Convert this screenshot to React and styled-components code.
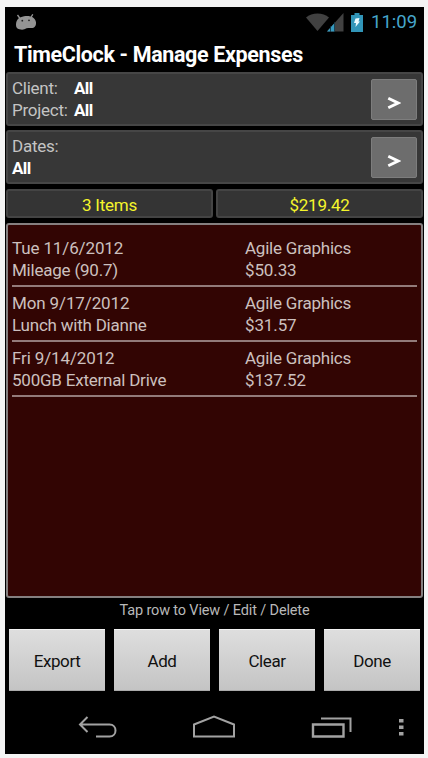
import React from "react";
import styled, { createGlobalStyle } from "styled-components";

const GlobalStyle = createGlobalStyle`
  * { box-sizing: border-box; }
  body {
    margin: 0;
    background: #f4f4f4;
    font-family: Roboto, "Liberation Sans", sans-serif;
  }
  button { font-family: inherit; border: 0; padding: 0; margin: 0; }
`;

const Page = styled.div`
  height: 758px;
  padding: 7px 4px 4px 5px;
  overflow: hidden;
`;

const Screen = styled.main`
  height: 747px;
  display: flex;
  flex-direction: column;
  background: #000;
  color: #c8c8c8;
  font-size: 17px;
  line-height: 22px;
  letter-spacing: -0.25px;
`;

const StatusBar = styled.header`
  height: 30px;
  display: flex;
  align-items: center;
  padding: 0 8px 0 10px;
`;

const StatusIcons = styled.div`
  display: flex;
  align-items: center;
  margin-left: auto;
`;

const Clock = styled.time`
  width: 45px;
  margin-left: 8px;
  color: #46a6cb;
  font-size: 18.5px;
  letter-spacing: 0;
  white-space: nowrap;
`;

const Title = styled.h1`
  height: 35px;
  margin: 0;
  padding-left: 9px;
  color: #fff;
  font-size: 21.5px;
  font-weight: 700;
  line-height: 35px;
  letter-spacing: -0.36px;
  white-space: nowrap;
`;

const Panel = styled.section`
  height: 54px;
  margin: 0 1px 4px;
  padding: 0 4px;
  display: flex;
  align-items: center;
  justify-content: space-between;
  background: #373737;
  border: 2px solid #464646;
  border-radius: 3px;
`;

const Fields = styled.dl`
  margin: 0;
  display: grid;
  grid-template-columns: ${(p) => (p.$stacked ? "auto" : "62px auto")};
  grid-auto-rows: 22px;
`;

const Label = styled.dt`
  color: #c4c4c4;
  white-space: nowrap;
`;

const Value = styled.dd`
  margin: 0;
  color: #fff;
  font-weight: 700;
  letter-spacing: -0.6px;
`;

const OpenButton = styled.button`
  width: 46px;
  height: 41px;
  margin-top: 1px;
  padding-top: 6px;
  display: flex;
  align-items: center;
  justify-content: center;
  background: #6d6d6d;
  border: 1px solid #7d7d7d;
  border-radius: 2px;
`;

const Totals = styled.div`
  height: 29px;
  margin: 1px 1px 5px;
  display: grid;
  grid-template-columns: 207px 1fr;
  gap: 3px;
`;

const Total = styled.div`
  display: flex;
  align-items: center;
  justify-content: center;
  padding-top: 3px;
  background: #343434;
  border: 2px solid #444;
  border-radius: 3px;
  color: #f4f52b;
`;

const ExpenseList = styled.ul`
  height: 375px;
  margin: 0 1px;
  padding: 7px 4px;
  list-style: none;
  background: #320503;
  border: 2px solid #858080;
  border-radius: 3px;
`;

const ExpenseRow = styled.li`
  height: 55px;
  padding-top: 5px;
  display: grid;
  grid-template-columns: 233px 1fr;
  grid-auto-rows: 22px;
  border-bottom: 2px solid #937b7a;
`;

const Cell = styled.span`
  color: #ccc0bf;
  letter-spacing: ${(p) => (p.$numeric ? -0.13 : -0.22)}px;
  white-space: nowrap;
`;

const Hint = styled.p`
  height: 31px;
  margin: 0;
  padding-top: 2px;
  color: #b9b9b9;
  font-size: 14.5px;
  line-height: 22px;
  letter-spacing: -0.15px;
  text-align: center;
`;

const Actions = styled.div`
  height: 62px;
  padding: 0 4px;
  display: grid;
  grid-template-columns: repeat(4, 96px);
  gap: 9px;
`;

const ActionButton = styled.button`
  padding-top: 2px;
  color: #111;
  font-size: 17px;
  letter-spacing: -0.4px;
  background: linear-gradient(#dedede, #c4c4c4);
  border-top: 1px solid #f2f2f2;
  border-bottom: 1px solid #aaa;
`;

const NavBar = styled.nav`
  flex: 1;
  display: flex;
  align-items: flex-start;
  padding: 24px 0 0 73px;
`;

const NavButton = styled.button`
  width: ${(p) => p.$width}px;
  height: 26px;
  margin-right: ${(p) => p.$after}px;
  background: none;
  svg { display: block; }
`;

const AndroidHead = () => (
  <svg width="22" height="17" viewBox="0 0 22 17">
    <path d="M2.500 1 5 4.500M17.800 .3 15.500 4" stroke="#949494" strokeWidth="1.300" />
    <path d="M1 10.500C1.200 5.500 4 3 9 2.200 15 1.200 20.200 3 21 8.200c.3 3.800-1.500 5.800-4.500 5.800-2 0-3-.1-5 .3C9.500 15.700 7 16.200 4.500 15.300 2 14.800.8 13.300 1 10.500Z" fill="#949494" />
    <circle cx="7.300" cy="6.700" r=".9" fill="#222" />
    <circle cx="14" cy="6.300" r=".9" fill="#222" />
  </svg>
);

const Wifi = () => (
  <svg width="21" height="18" viewBox="0 0 21 18" overflow="visible">
    <path d="M0 4.500C6-.8 17-.8 23 4.500L11.500 18Z" fill="#414141" />
  </svg>
);

const Signal = () => (
  <svg width="24" height="19" viewBox="0 0 24 19">
    <path d="M0 18.500 16.500 0v18.500Z" fill="#414141" />
    <path d="M0 18.500 8 9.500v9Z" fill="#359abf" />
    <path d="M3.500 13v6M7.500 9v10" stroke="#102c38" strokeWidth=".8" />
  </svg>
);

const Battery = () => (
  <svg width="12" height="19" viewBox="0 0 12 19">
    <path d="M3.500 0h5v2H12v17H0V2h3.500Z" fill="#3195b8" />
    <path d="m4.500 5.500 4-.5-1 3.500H9L4.500 14 5 10H3Z" fill="#eafaff" />
  </svg>
);

const Chevron = () => (
  <svg width="14" height="14" viewBox="0 0 14 14">
    <path d="M1.300 2.200 11 7 1.300 11.800" fill="none" stroke="#fff" strokeWidth="2.900" />
  </svg>
);

const BackIcon = () => (
  <svg width="40" height="26" viewBox="0 0 40 26" fill="none" stroke="#a2a2a2" strokeWidth="2">
    <path d="M9.500 2 2 9.500l7.500 7.500M2 9.500h29.500c8 0 8 12 0 12H18" />
  </svg>
);

const HomeIcon = () => (
  <svg width="44" height="26" viewBox="0 0 44 26" fill="none" stroke="#a2a2a2" strokeWidth="2">
    <path d="M1 21.500V9.500L21 1.500 41 9.500v12Z" />
  </svg>
);

const RecentIcon = () => (
  <svg width="41" height="26" viewBox="0 0 41 26" fill="none" stroke="#a2a2a2" strokeWidth="2.400">
    <path d="M2 9.500h30.500v12H2Z" />
    <path d="M10 3.500h29.500V17" strokeWidth="2" />
  </svg>
);

const MenuIcon = () => (
  <svg width="5" height="26" viewBox="0 0 5 26" fill="#a2a2a2">
    <path d="M0 4h4.500v3.500H0ZM0 10.500h4.500V14H0ZM0 17h4.500v3.500H0Z" />
  </svg>
);

const expenses = [
  { date: "Tue 11/6/2012", item: "Mileage (90.7)", client: "Agile Graphics", amount: "$50.33" },
  { date: "Mon 9/17/2012", item: "Lunch with Dianne", client: "Agile Graphics", amount: "$31.57" },
  { date: "Fri 9/14/2012", item: "500GB External Drive", client: "Agile Graphics", amount: "$137.52" },
];

const actions = ["Export", "Add", "Clear", "Done"];

export default function App() {
  return (
    <Page>
      <GlobalStyle />
      <Screen>
        <StatusBar>
          <AndroidHead />
          <StatusIcons>
            <Wifi />
            <Signal />
            <Battery />
          </StatusIcons>
          <Clock>11:09</Clock>
        </StatusBar>
        <Title>TimeClock - Manage Expenses</Title>
        <Panel>
          <Fields>
            <Label>Client:</Label>
            <Value>All</Value>
            <Label>Project:</Label>
            <Value>All</Value>
          </Fields>
          <OpenButton aria-label="Choose client"><Chevron /></OpenButton>
        </Panel>
        <Panel>
          <Fields $stacked>
            <Label>Dates:</Label>
            <Value>All</Value>
          </Fields>
          <OpenButton aria-label="Choose dates"><Chevron /></OpenButton>
        </Panel>
        <Totals>
          <Total>3 Items</Total>
          <Total>$219.42</Total>
        </Totals>
        <ExpenseList>
          {expenses.map((e) => (
            <ExpenseRow key={e.date}>
              <Cell $numeric>{e.date}</Cell>
              <Cell>{e.client}</Cell>
              <Cell>{e.item}</Cell>
              <Cell $numeric>{e.amount}</Cell>
            </ExpenseRow>
          ))}
        </ExpenseList>
        <Hint>Tap row to View / Edit / Delete</Hint>
        <Actions>
          {actions.map((a) => (
            <ActionButton key={a}>{a}</ActionButton>
          ))}
        </Actions>
        <NavBar>
          <NavButton $width={40} $after={75} aria-label="Back"><BackIcon /></NavButton>
          <NavButton $width={44} $after={74} aria-label="Home"><HomeIcon /></NavButton>
          <NavButton $width={41} $after={47} aria-label="Recent apps"><RecentIcon /></NavButton>
          <NavButton $width={5} $after={0} aria-label="Menu"><MenuIcon /></NavButton>
        </NavBar>
      </Screen>
    </Page>
  );
}
